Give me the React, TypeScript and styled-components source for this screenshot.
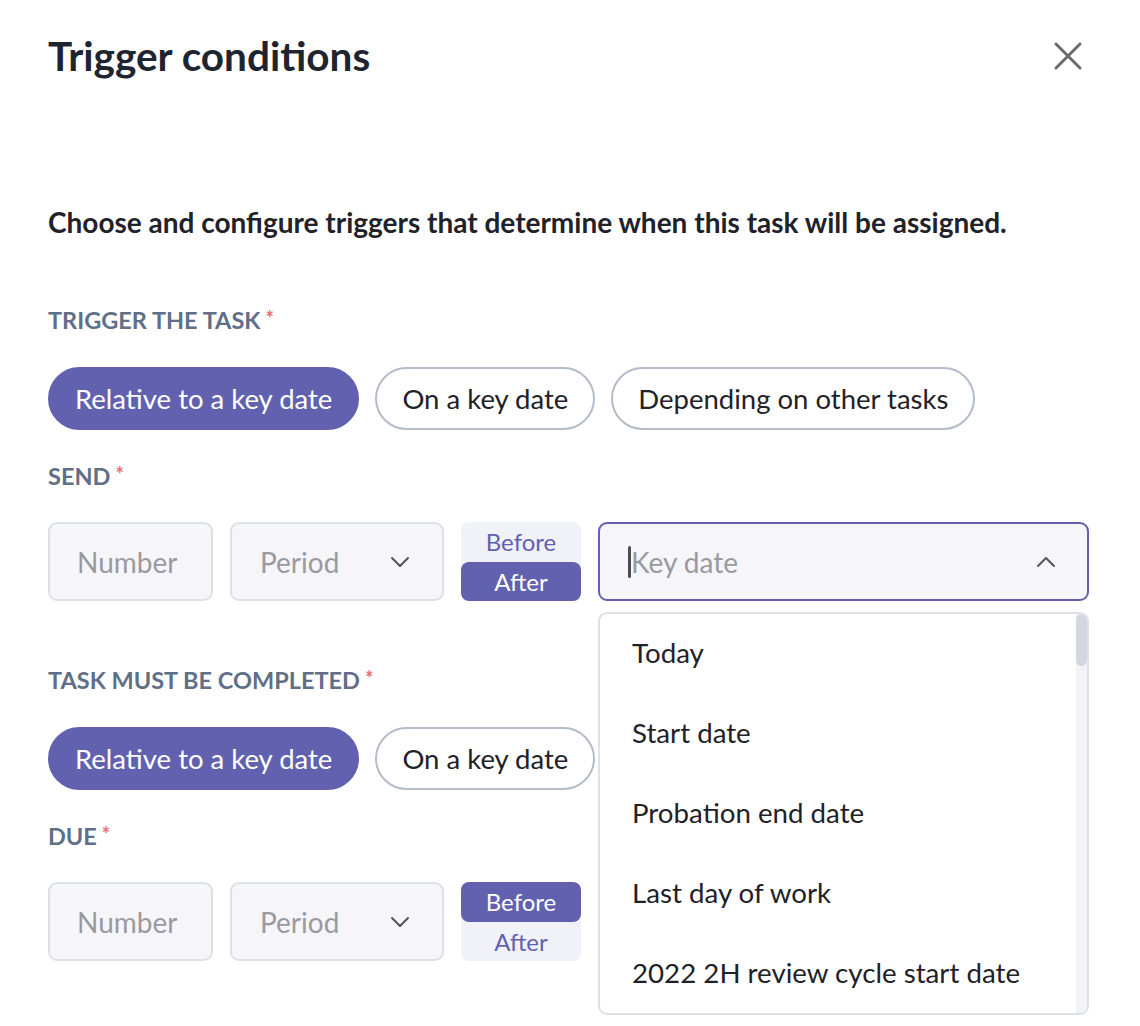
import React from 'react';
import styled, { createGlobalStyle } from 'styled-components';
import { ChevronDown, ChevronUp } from 'lucide-react';

const GlobalStyle = createGlobalStyle`
    html, body {
        margin: 0;
        padding: 0;
        background: #ffffff;
    }

    body {
        font-family: Lato, "Open Sans", sans-serif;
        color: #1f2530;
    }

    * {
        box-sizing: border-box;
    }
`;

const PURPLE = '#6261b0';

const keyDates = ['Today', 'Start date', 'Probation end date', 'Last day of work', '2022 2H review cycle start date'];

type Timing = 'before' | 'after';

const App = (): JSX.Element => {
    return (
        <>
            <GlobalStyle />
            <Page>
                <Header>
                    <Title>Trigger conditions</Title>
                    <CloseButton aria-label="Close">
                        <svg width="28" height="28" viewBox="0 0 28 28">
                            <path d="M2 2 L26 26 M26 2 L2 26" stroke="#6b6b6b" strokeWidth="3" strokeLinecap="round" />
                        </svg>
                    </CloseButton>
                </Header>

                <Intro>Choose and configure triggers that determine when this task will be assigned.</Intro>

                <Section>
                    <Field>
                        <Label>TRIGGER THE TASK<Required>*</Required></Label>
                        <PillRow>
                            <Pill $active>Relative to a key date</Pill>
                            <Pill>On a key date</Pill>
                            <Pill>Depending on other tasks</Pill>
                        </PillRow>
                    </Field>

                    <Field $gap={32}>
                        <Label>SEND<Required>*</Required></Label>
                        <InputRow>
                            <NumberBox>Number</NumberBox>
                            <PeriodBox>
                                <span>Period</span>
                                <ChevronDown size={32} strokeWidth={1.5} color="#555" />
                            </PeriodBox>
                            <TimingToggle value="after" />
                            <KeyDateWrap>
                                <KeyDateBox>
                                    <Caret />
                                    <span>Key date</span>
                                    <ChevronUp size={32} strokeWidth={1.5} color="#555" />
                                </KeyDateBox>
                                <Menu>
                                    <MenuList>
                                        {keyDates.map((d) => (
                                            <MenuItem key={d}>{d}</MenuItem>
                                        ))}
                                    </MenuList>
                                    <ScrollTrack>
                                        <ScrollThumb />
                                    </ScrollTrack>
                                </Menu>
                            </KeyDateWrap>
                        </InputRow>
                    </Field>
                </Section>

                <Section>
                    <Field>
                        <Label>TASK MUST BE COMPLETED<Required>*</Required></Label>
                        <PillRow>
                            <Pill $active>Relative to a key date</Pill>
                            <Pill>On a key date</Pill>
                        </PillRow>
                    </Field>

                    <Field $gap={32}>
                        <Label>DUE<Required>*</Required></Label>
                        <InputRow>
                            <NumberBox>Number</NumberBox>
                            <PeriodBox>
                                <span>Period</span>
                                <ChevronDown size={32} strokeWidth={1.5} color="#555" />
                            </PeriodBox>
                            <TimingToggle value="before" />
                        </InputRow>
                    </Field>
                </Section>
            </Page>
        </>
    );
};

const TimingToggle = ({ value }: { value: Timing }): JSX.Element => (
    <Toggle>
        <ToggleOption $selected={value === 'before'}>Before</ToggleOption>
        <ToggleOption $selected={value === 'after'}>After</ToggleOption>
    </Toggle>
);

const Page = styled.div`
    width: 1140px;
    min-height: 1026px;
    padding: 0 51px 0 48px;
`;

const Header = styled.div`
    height: 112px;
    display: flex;
    align-items: center;
    justify-content: space-between;
`;

const Title = styled.h1`
    margin: 0;
    font-size: 40.5px;
    line-height: 48px;
    font-weight: 700;
    color: #1f2530;
`;

const CloseButton = styled.button`
    width: 28px;
    height: 28px;
    margin-right: 7px;
    padding: 0;
    border: none;
    background: none;
    display: flex;
`;

const Intro = styled.p`
    margin: 93px 0 65px;
    font-size: 28px;
    line-height: 34px;
    font-weight: 700;
    color: #1f2228;
`;

const Section = styled.div`
    display: flex;
    flex-direction: column;
    gap: 30px;

    & + & {
        margin-top: 63px;
    }
`;

const Field = styled.div<{ $gap?: number }>`
    display: flex;
    flex-direction: column;
    gap: ${(p) => p.$gap ?? 33}px;
`;

const Label = styled.div`
    font-size: 23.5px;
    line-height: 28px;
    font-weight: 700;
    color: #5f6f87;
`;

const Required = styled.span`
    color: #e46f6f;
    margin-left: 5px;
    font-size: 20px;
    vertical-align: 3px;
`;

const PillRow = styled.div`
    display: flex;
    gap: 16px;
`;

const Pill = styled.button<{ $active?: boolean }>`
    height: 63px;
    padding: 0 25px;
    border-radius: 32px;
    font-family: Lato, sans-serif;
    font-size: 27.5px;
    border: 2px solid ${(p) => (p.$active ? PURPLE : '#b3bcc9')};
    background: ${(p) => (p.$active ? PURPLE : '#ffffff')};
    color: ${(p) => (p.$active ? '#ffffff' : '#1f2228')};
`;

const InputRow = styled.div`
    display: flex;
    gap: 17px;
    align-items: flex-start;
`;

const Box = styled.div`
    height: 79px;
    background: #f5f5fa;
    border: 2px solid #dde0e6;
    border-radius: 9px;
    display: flex;
    align-items: center;
    font-size: 28px;
    color: #9a9a9e;
`;

const NumberBox = styled(Box)`
    width: 165px;
    padding-left: 27px;
`;

const PeriodBox = styled(Box)`
    width: 214px;
    padding: 0 26px 0 28px;
    justify-content: space-between;
`;

const Toggle = styled.div`
    width: 120px;
    height: 79px;
    border-radius: 8px;
    background: #f1f1f8;
    display: flex;
    flex-direction: column;
`;

const ToggleOption = styled.div<{ $selected: boolean }>`
    flex: 1;
    display: flex;
    align-items: center;
    justify-content: center;
    font-size: 24px;
    border-radius: 8px;
    background: ${(p) => (p.$selected ? PURPLE : 'transparent')};
    color: ${(p) => (p.$selected ? '#ffffff' : PURPLE)};
`;

const KeyDateWrap = styled.div`
    position: relative;
    flex: 1;
`;

const KeyDateBox = styled(Box)`
    border-color: ${PURPLE};
    padding: 0 25px 0 28px;

    span {
        flex: 1;
    }
`;

const Caret = styled.div`
    width: 3px;
    height: 32px;
    border-radius: 2px;
    background: #4a4d55;
`;

const Menu = styled.div`
    position: absolute;
    top: 90px;
    left: 0;
    right: 0;
    height: 403px;
    background: #ffffff;
    border: 2px solid #dde0e6;
    border-radius: 9px;
    overflow: hidden;
    display: flex;
`;

const MenuList = styled.div`
    flex: 1;
    margin-top: -2px;
`;

const MenuItem = styled.div`
    height: 80px;
    display: flex;
    align-items: center;
    padding-left: 32px;
    font-size: 27.7px;
    color: #1f2228;
`;

const ScrollTrack = styled.div`
    width: 11px;
    background: #f2f3f6;
`;

const ScrollThumb = styled.div`
    height: 52px;
    border-radius: 6px;
    background: #d4d7df;
`;

export default App;
